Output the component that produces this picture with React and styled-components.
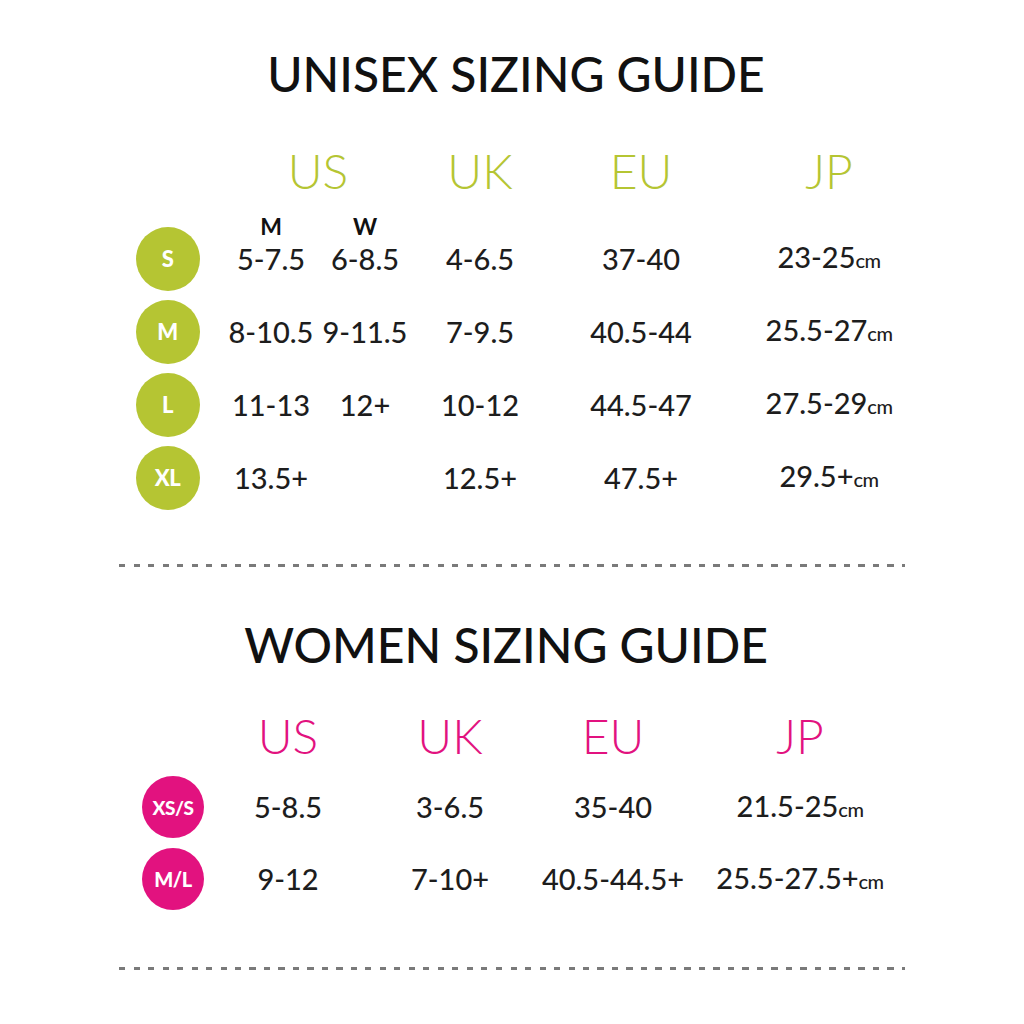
import styled, { createGlobalStyle } from "styled-components";

const GREEN = "#b5c533";
const PINK = "#e2127f";

const unisex = [
  { size: "S", m: "5-7.5", w: "6-8.5", uk: "4-6.5", eu: "37-40", jp: "23-25", first: true },
  { size: "M", m: "8-10.5", w: "9-11.5", uk: "7-9.5", eu: "40.5-44", jp: "25.5-27" },
  { size: "L", m: "11-13", w: "12+", uk: "10-12", eu: "44.5-47", jp: "27.5-29" },
  { size: "XL", m: "13.5+", w: "", uk: "12.5+", eu: "47.5+", jp: "29.5+" },
];

const women = [
  { size: "XS/S", us: "5-8.5", uk: "3-6.5", eu: "35-40", jp: "21.5-25" },
  { size: "M/L", us: "9-12", uk: "7-10+", eu: "40.5-44.5+", jp: "25.5-27.5+" },
];

const GlobalStyle = createGlobalStyle`
  body {
    margin: 0;
    background: #fff;
    font-family: Lato, "Open Sans", sans-serif;
    color: #1d1d1d;
  }
`;

function Sizes({ value }) {
  return (
    <Value>
      {value}
      <Cm>cm</Cm>
    </Value>
  );
}

function App() {
  return (
    <Page>
      <GlobalStyle />
      <Title $top={50} $shift={4}>UNISEX SIZING GUIDE</Title>
      <Table
        $top={49}
        $left={135}
        $cols="65px 236px 88px 234px 142px"
        $rows="75px repeat(4, 73px)"
      >
        <span />
        <Header $color={GREEN}>US</Header>
        <Header $color={GREEN}>UK</Header>
        <Header $color={GREEN}>EU</Header>
        <Header $color={GREEN}>JP</Header>
        {unisex.map((r) => (
          <Row key={r.size}>
            <Badge $bg={GREEN} $size={64} $font={22}>{r.size}</Badge>
            <UsPair>
              <Stack>
                {r.first && <SubLabel>M</SubLabel>}
                <Value>{r.m}</Value>
              </Stack>
              <Stack>
                {r.first && <SubLabel>W</SubLabel>}
                <Value>{r.w}</Value>
              </Stack>
            </UsPair>
            <Value>{r.uk}</Value>
            <Value>{r.eu}</Value>
            <Sizes value={r.jp} />
          </Row>
        ))}
      </Table>
      <Dashed $top={50} />

      <Title $top={54} $shift={-6}>WOMEN SIZING GUIDE</Title>
      <Table
        $top={43}
        $left={142}
        $cols="62px 168px 156px 170px 204px"
        $rows="59px repeat(2, 72px)"
      >
        <span />
        <Header $color={PINK}>US</Header>
        <Header $color={PINK}>UK</Header>
        <Header $color={PINK}>EU</Header>
        <Header $color={PINK}>JP</Header>
        {women.map((r) => (
          <Row key={r.size}>
            <Badge $bg={PINK} $size={62} $font={r.size.length > 3 ? 19 : 20}>
              {r.size}
            </Badge>
            <Value>{r.us}</Value>
            <Value>{r.uk}</Value>
            <Value>{r.eu}</Value>
            <Sizes value={r.jp} />
          </Row>
        ))}
      </Table>
      <Dashed $top={52} />
    </Page>
  );
}

export default App;

const Page = styled.div`
  width: 1024px;
  height: 1024px;
  overflow: hidden;
  display: flex;
  flex-direction: column;
`;

const Title = styled.h2`
  margin: ${(p) => p.$top}px 0 0;
  font-size: 48px;
  line-height: 48px;
  font-weight: 500;
  color: #111;
  text-align: center;
  padding-left: ${(p) => (p.$shift > 0 ? p.$shift * 2 : 0)}px;
  padding-right: ${(p) => (p.$shift < 0 ? -p.$shift * 2 : 0)}px;
`;

const Table = styled.div`
  margin: ${(p) => p.$top}px 0 0 ${(p) => p.$left}px;
  display: grid;
  grid-template-columns: ${(p) => p.$cols};
  grid-template-rows: ${(p) => p.$rows};
  justify-items: center;
`;

const Row = styled.div`
  display: contents;
`;

const Header = styled.div`
  align-self: start;
  font-size: 48px;
  line-height: 48px;
  font-weight: 300;
  color: ${(p) => p.$color};
`;

const Badge = styled.div`
  align-self: center;
  width: ${(p) => p.$size}px;
  height: ${(p) => p.$size}px;
  border-radius: 50%;
  background: ${(p) => p.$bg};
  color: #fff;
  display: flex;
  align-items: center;
  justify-content: center;
  font-size: ${(p) => p.$font}px;
  font-weight: 900;
  letter-spacing: -0.5px;
`;

const UsPair = styled.div`
  align-self: center;
  display: grid;
  grid-template-columns: 94px 94px;
  padding: 0 24px;
  justify-items: center;
`;

const Stack = styled.div`
  display: flex;
  flex-direction: column;
  align-items: center;
`;

const SubLabel = styled.div`
  height: 22px;
  margin: -29px 0 7px;
  font-size: 23px;
  line-height: 22px;
  font-weight: 700;
  color: #111;
`;

const Value = styled.div`
  align-self: center;
  white-space: nowrap;
  font-size: 29px;
  line-height: 30px;
  font-weight: 500;
  color: #1d1d1d;
`;

const Cm = styled.span`
  font-size: 20px;
  letter-spacing: -0.5px;
`;

const Dashed = styled.div`
  margin: ${(p) => p.$top}px 0 0 119px;
  width: 786px;
  height: 3px;
  background: repeating-linear-gradient(
    to right,
    #7a7a7a 0 6px,
    transparent 6px 14.5px
  );
`;
